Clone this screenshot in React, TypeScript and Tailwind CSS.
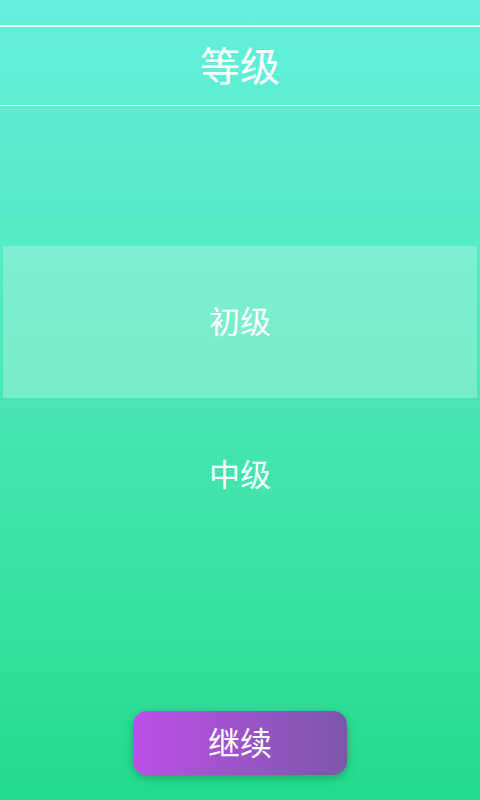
export default function App() {
  const font = { fontFamily: '"Noto Sans CJK SC", "Noto Sans", sans-serif' }

  return (
    <div
      className="w-[480px] h-[800px] flex flex-col bg-gradient-to-b from-[#64f0dd] to-[#21dc8b] text-white"
      style={font}
    >
      {/* 顶部 */}
      <div className="h-[25px]" />
      <div className="h-[2px] bg-white/90" />
      <div className="h-[78px] flex items-center justify-center pb-[4px]">
        <h1 className="text-[40px] leading-none">等级</h1>
      </div>
      <div className="h-px bg-white/80" />

      {/* 等级列表 */}
      <div className="h-[140px]" />
      <div className="mx-[3px] h-[152px] bg-white/25 flex items-center justify-center pb-[5px]">
        <span className="text-[31px] leading-none">初级</span>
      </div>
      <div className="h-[152px] flex items-center justify-center pb-[3px]">
        <span className="text-[31px] leading-none">中级</span>
      </div>

      <div className="flex-1" />

      {/* 继续按钮 */}
      <div className="flex justify-center pb-[25px]">
        <button
          className="w-[214px] h-[64px] rounded-[14px] bg-gradient-to-r from-[#bd4ee8] to-[#7c55ab] shadow-[0_3px_10px_rgba(0,0,0,0.25)] text-[32px] leading-none text-white pb-[4px]"
          style={font}
        >
          继续
        </button>
      </div>
    </div>
  )
}
